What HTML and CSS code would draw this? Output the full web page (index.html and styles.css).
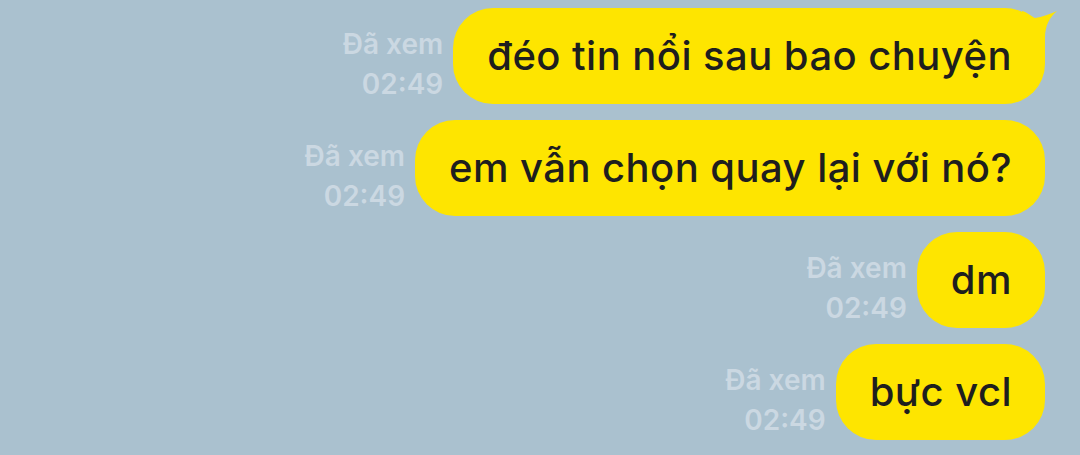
FILE: index.html
```html
<!DOCTYPE html>
<html>

<head>
  <meta charset="UTF-8" />
  <meta name="viewport" content="width=device-width, initial-scale=1.0" />
  <title>Chat</title>
  <link rel="stylesheet" href="styles.css">
</head>

<body>
  <div class="chat">
    <div class="row">
      <div class="meta">
        <span>Đã xem</span>
        <span>02:49</span>
      </div>
      <div class="bubble">
        đéo tin nổi sau bao chuyện
        <svg class="tail" width="36" height="40" viewBox="0 0 36 40">
          <path d="M0 3 C5 4 9 8 13 10 C20 9 28 6 35 3 C28 9 23 17 23 30 L23 40 L0 40 Z" fill="#fee500" />
        </svg>
      </div>
    </div>
    <div class="row">
      <div class="meta">
        <span>Đã xem</span>
        <span>02:49</span>
      </div>
      <div class="bubble">em vẫn chọn quay lại với nó?</div>
    </div>
    <div class="row">
      <div class="meta">
        <span>Đã xem</span>
        <span>02:49</span>
      </div>
      <div class="bubble">dm</div>
    </div>
    <div class="row">
      <div class="meta">
        <span>Đã xem</span>
        <span>02:49</span>
      </div>
      <div class="bubble">bực vcl</div>
    </div>
  </div>
</body>

</html>
```

FILE: styles.css
```css
body {
  margin: 0;
  background: #aac1cf;
  font-family: Inter, "Liberation Sans", sans-serif;
  height: 455px;
  overflow: hidden;
}

.chat {
  display: flex;
  flex-direction: column;
  align-items: flex-end;
  gap: 16px;
  padding: 8px 35px 0 0;
}

.row {
  display: flex;
  align-items: flex-end;
  gap: 10px;
}

.meta {
  display: flex;
  flex-direction: column;
  align-items: flex-end;
  color: #cbd8e2;
  font-size: 28px;
  font-weight: 600;
  line-height: 40px;
}

.bubble {
  position: relative;
  background: #fee500;
  color: #1e1e1e;
  font-size: 40px;
  font-weight: 500;
  letter-spacing: 0.45px;
  line-height: 96px;
  height: 96px;
  padding: 0 33px 0 34px;
  border-radius: 40px;
  white-space: nowrap;
}

.tail {
  position: absolute;
  top: 0;
  right: -13px;
}
```
